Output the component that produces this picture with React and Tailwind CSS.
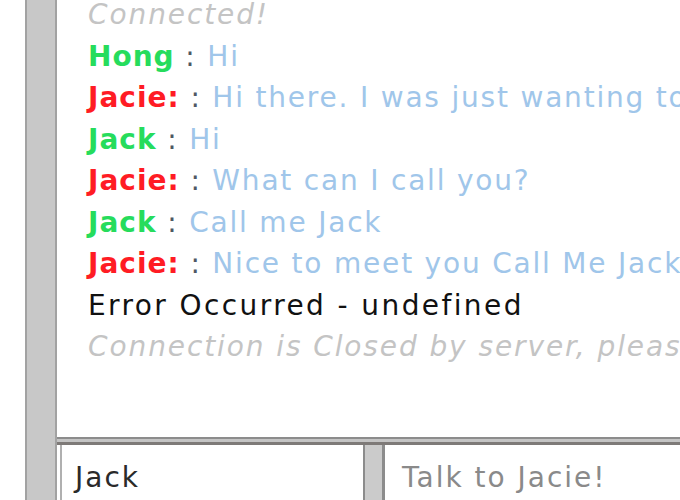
import React from "react";

const lines = [
  { type: "info", text: "Connected!" },
  { type: "msg", name: "Hong", who: "other", text: "Hi" },
  { type: "msg", name: "Jacie:", who: "bot", text: "Hi there. I was just wanting to get to know you" },
  { type: "msg", name: "Jack", who: "other", text: "Hi" },
  { type: "msg", name: "Jacie:", who: "bot", text: "What can I call you?" },
  { type: "msg", name: "Jack", who: "other", text: "Call me Jack" },
  { type: "msg", name: "Jacie:", who: "bot", text: "Nice to meet you Call Me Jack" },
  { type: "error", text: "Error Occurred - undefined" },
  { type: "info", text: "Connection is Closed by server, please refresh the page" },
];

function ChatLine({ line }) {
  if (line.type === "info") {
    return <div className="italic tracking-[1.9px] text-[#c4c4c4]">{line.text}</div>;
  }
  if (line.type === "error") {
    return <div className="tracking-[2.4px] text-[#111]">{line.text}</div>;
  }
  return (
    <div>
      <span
        className={
          line.who === "bot"
            ? "font-bold tracking-[1px] text-[#ff1c24]"
            : "font-bold tracking-[1px] text-[#26dc5c]"
        }
      >
        {line.name}
      </span>
      <span className="tracking-[1.8px] text-[#4e5864]"> : </span>
      <span className="tracking-[1.8px] text-[#a0c6ea]">{line.text}</span>
    </div>
  );
}

export default function App() {
  return (
    <div
      className="w-[680px] h-[500px] flex bg-white overflow-hidden text-[28px] leading-[41.5px]"
      style={{ fontFamily: '"DejaVu Sans", sans-serif' }}
    >
      <div className="w-[25px] shrink-0 bg-white" />
      <div className="w-[32px] shrink-0 bg-[#c8c8c8] border-l-2 border-r-2 border-[#a2a2a2]" />

      <div className="flex-1 flex flex-col min-w-0">
        {/* chat log */}
        <div className="h-[437px] overflow-hidden pl-[31px] whitespace-nowrap">
          <div className="-mt-[6px]">
            {lines.map((l, i) => (
              <ChatLine key={i} line={l} />
            ))}
          </div>
        </div>

        {/* frame edge */}
        <div className="h-[8px] bg-[#c4c4c4] border-t-2 border-b-[3px] border-t-[#8c8c8c] border-b-[#7e7a78]" />

        {/* inputs */}
        <div className="flex-1 flex">
          <div className="w-[306px] shrink-0 pl-[3px] bg-white">
            <div className="h-full border-l-2 border-[#b0b0b0] pl-[13px] pt-[12px] tracking-[2px] text-[#2a2a2a]">
              Jack
            </div>
          </div>
          <div className="w-[22px] shrink-0 bg-[#cbcbcb] border-l-2 border-r-[3px] border-[#8c8c8c]" />
          <div className="flex-1 pl-[17px] pt-[12px] tracking-[2px] text-[#8a8a8a] whitespace-nowrap">
            Talk to Jacie!
          </div>
        </div>
      </div>
    </div>
  );
}
